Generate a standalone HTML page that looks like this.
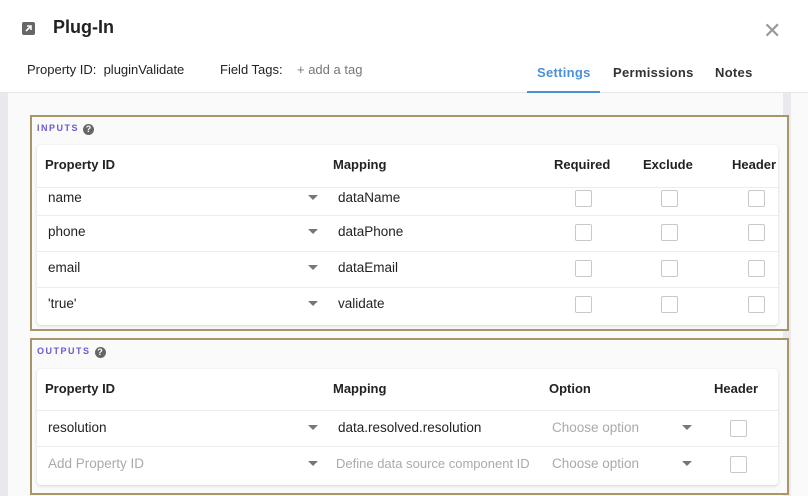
<!DOCTYPE html>
<html><head><style>
*{box-sizing:border-box;margin:0;padding:0}
body{width:808px;height:496px;overflow:hidden;background:#fafafa;font-family:"Liberation Sans",Arial,sans-serif;position:relative;color:#222}
.a{position:absolute}
.hdr{left:0;top:0;width:808px;height:93px;background:#fff;border-bottom:1px solid #e6e6e6}
.box{position:absolute;left:30px;width:759px;border:2px solid #a8956a;background:#fafafa}
.card{position:absolute;left:5px;right:9px;background:#fff;border-radius:4px;box-shadow:0 1px 3px rgba(0,0,0,.15)}
.th{font-size:13px;font-weight:bold;color:#222;position:absolute}
.row{position:absolute;left:0;right:0;border-top:1px solid #ececec;font-size:13.5px;color:#222}
.row span{position:absolute}
.cb{position:absolute;width:17px;height:17px;border:1px solid #c8c8c8;border-radius:2px;background:#fff}
.tri{position:absolute;width:0;height:0;border-left:5px solid transparent;border-right:5px solid transparent;border-top:5px solid #777}
.lbl{position:absolute;left:5px;top:6px;font-size:9px;letter-spacing:1.5px;color:#6a5bd0;font-weight:bold}
.q{display:inline-block;width:11px;height:11px;border-radius:50%;background:#666;color:#fff;font-size:9px;text-align:center;line-height:11px;letter-spacing:0;margin-left:4px;vertical-align:-1px}
.ph{color:#aaa}
</style></head><body>
<div class="a" style="left:0;top:93px;width:8px;height:403px;background:#e9e9ed"></div>
<div class="a" style="left:783px;top:93px;width:8px;height:403px;background:#eaeaee"></div>
<div class="a hdr"></div>
<div class="a" style="left:22px;top:22px;width:13px;height:13px;background:#666;border-radius:2px"></div>
<svg class="a" style="left:22px;top:22px" width="13" height="13"><path d="M4 9 L9 4 M5 4 H9 V8" stroke="#fff" stroke-width="1.6" fill="none"/></svg>
<div class="a" style="left:53px;top:17px;font-size:18px;font-weight:bold;color:#222">Plug-In</div>
<div class="a" style="left:27px;top:62px;font-size:13px;color:#222">Property ID:&nbsp; pluginValidate</div>
<div class="a" style="left:220px;top:62px;font-size:13px;color:#222">Field Tags:</div>
<div class="a" style="left:297px;top:62px;font-size:13px;color:#777">+ add a tag</div>
<div class="a" style="left:537px;top:65px;font-size:13px;font-weight:bold;color:#4a90d9;letter-spacing:.3px">Settings</div>
<div class="a" style="left:527px;top:91px;width:73px;height:2px;background:#4a90d9"></div>
<div class="a" style="left:613px;top:65px;font-size:13px;font-weight:bold;color:#333;letter-spacing:.3px">Permissions</div>
<div class="a" style="left:715px;top:65px;font-size:13px;font-weight:bold;color:#333;letter-spacing:.3px">Notes</div>
<div class="a" style="left:763px;top:18px;font-size:22px;color:#999">✕</div>

<div class="box" style="top:115px;height:216px">
 <div class="lbl">INPUTS<span class="q">?</span></div>
 <div class="card" style="top:28px;height:180px">
  <div class="th" style="left:8px;top:12px">Property ID</div>
  <div class="th" style="left:296px;top:12px">Mapping</div>
  <div class="th" style="left:517px;top:12px">Required</div>
  <div class="th" style="left:606px;top:12px">Exclude</div>
  <div class="th" style="left:695px;top:12px">Header</div>
  <div class="row" style="top:42px;height:28px"><span style="left:11px;top:2px">name</span><div class="tri" style="left:271px;top:7px"></div><span style="left:301px;top:2px">dataName</span><div class="cb" style="left:538px;top:2px"></div><div class="cb" style="left:624px;top:2px"></div><div class="cb" style="left:711px;top:2px"></div></div>
  <div class="row" style="top:70px;height:36px"><span style="left:11px;top:8px">phone</span><div class="tri" style="left:271px;top:13px"></div><span style="left:301px;top:8px">dataPhone</span><div class="cb" style="left:538px;top:8px"></div><div class="cb" style="left:624px;top:8px"></div><div class="cb" style="left:711px;top:8px"></div></div>
  <div class="row" style="top:106px;height:36px"><span style="left:11px;top:8px">email</span><div class="tri" style="left:271px;top:13px"></div><span style="left:301px;top:8px">dataEmail</span><div class="cb" style="left:538px;top:8px"></div><div class="cb" style="left:624px;top:8px"></div><div class="cb" style="left:711px;top:8px"></div></div>
  <div class="row" style="top:142px;height:36px"><span style="left:11px;top:8px">'true'</span><div class="tri" style="left:271px;top:13px"></div><span style="left:301px;top:8px">validate</span><div class="cb" style="left:538px;top:8px"></div><div class="cb" style="left:624px;top:8px"></div><div class="cb" style="left:711px;top:8px"></div></div>
 </div>
</div>

<div class="box" style="top:338px;height:157px">
 <div class="lbl">OUTPUTS<span class="q">?</span></div>
 <div class="card" style="top:29px;height:116px">
  <div class="th" style="left:8px;top:12px">Property ID</div>
  <div class="th" style="left:296px;top:12px">Mapping</div>
  <div class="th" style="left:512px;top:12px">Option</div>
  <div class="th" style="left:677px;top:12px">Header</div>
  <div class="row" style="top:41px;height:36px"><span style="left:11px;top:9px">resolution</span><div class="tri" style="left:271px;top:14px"></div><span style="left:301px;top:9px">data.resolved.resolution</span><span class="ph" style="left:515px;top:9px">Choose option</span><div class="tri" style="left:645px;top:14px"></div><div class="cb" style="left:693px;top:9px"></div></div>
  <div class="row" style="top:77px;height:36px"><span class="ph" style="left:11px;top:9px">Add Property ID</span><div class="tri" style="left:271px;top:14px"></div><span class="ph" style="left:299px;top:9px;font-size:13px">Define data source component ID</span><span class="ph" style="left:515px;top:9px">Choose option</span><div class="tri" style="left:645px;top:14px"></div><div class="cb" style="left:693px;top:9px"></div></div>
 </div>
</div>
</body></html>
